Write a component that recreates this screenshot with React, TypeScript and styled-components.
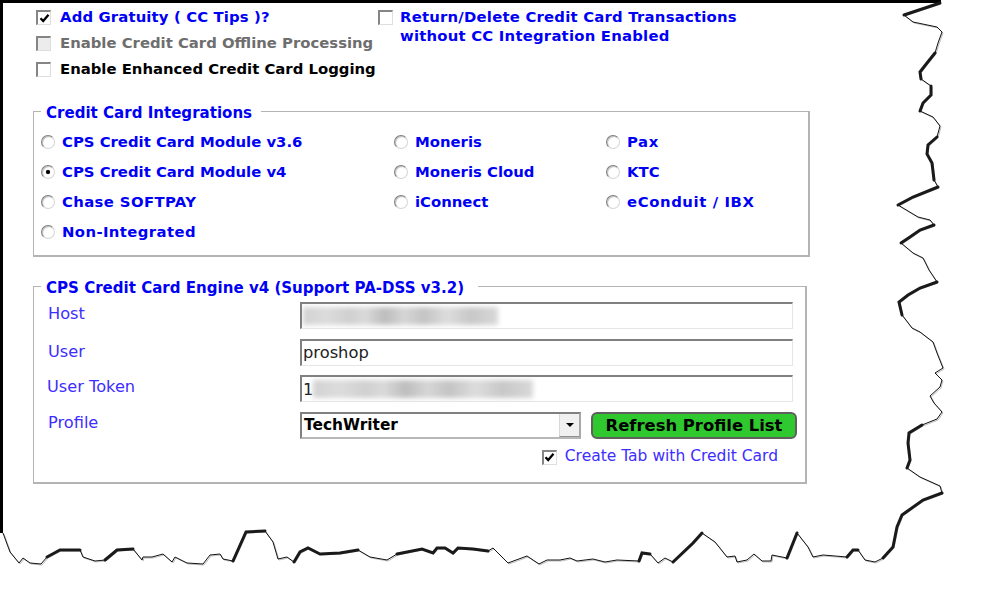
import React from 'react';
import styled, { createGlobalStyle } from 'styled-components';

const GlobalStyle = createGlobalStyle`
  html, body {
    margin: 0;
    padding: 0;
    background: #fff;
  }
`;

const Sheet = styled.div`
  position: relative;
  width: 981px;
  height: 612px;
  box-sizing: border-box;
  overflow: hidden;
  padding: 8px 0 0 33px;
  font-family: "DejaVu Sans", Verdana, sans-serif;
`;

const TornEdge = styled.svg`
  position: absolute;
  left: 0;
  top: 0;
  pointer-events: none;
`;

const TopOptions = styled.div`
  display: grid;
  grid-template-columns: 342px 1fr;
  height: 92px;
`;

const OptionList = styled.div`
  display: flex;
  flex-direction: column;
  gap: 8px;
`;

const OptionRow = styled.div<{ $gap?: number }>`
  display: flex;
  align-items: flex-start;
  gap: ${p => p.$gap ?? 9}px;
  padding-left: 3px;
  height: 18px;
`;

const OptionText = styled.span<{ $tone: 'blue' | 'gray' | 'black'; $spread?: number }>`
  font-size: 14.85px;
  font-weight: 700;
  line-height: 19px;
  white-space: nowrap;
  letter-spacing: ${p => p.$spread ?? 0}px;
  color: ${p => (p.$tone === 'blue' ? '#0000f5' : p.$tone === 'gray' ? '#6e6e6e' : '#000')};
`;

const Box = styled.span<{ $disabled?: boolean }>`
  flex: none;
  display: inline-flex;
  align-items: center;
  justify-content: center;
  width: 12px;
  height: 12px;
  margin-top: 2px;
  box-sizing: content-box;
  border-style: solid;
  border-width: 2px 1px 1px 2px;
  border-color: #858585 #dedede #dedede #858585;
  background: ${p => (p.$disabled ? '#ececec' : '#fff')};
`;

const Panel = styled.fieldset<{ $width: number; $height: number }>`
  box-sizing: border-box;
  width: ${p => p.$width}px;
  height: ${p => p.$height}px;
  margin: 0;
  padding: 0;
  border: 1px solid #b4b4b4;
  border-bottom-width: 2px;
  border-right-width: 2px;
  min-width: 0;
`;

const PanelTitle = styled.legend<{ $tail: number }>`
  margin-left: 7px;
  padding: 4px ${p => p.$tail}px 0 5px;
  font-size: 15.05px;
  font-weight: 700;
  line-height: 18px;
  color: #0000f5;
`;

const RadioGrid = styled.div`
  display: grid;
  grid-template-columns: 353px 212px 1fr;
  grid-auto-rows: 30px;
  padding: 10px 0 0 7px;
`;

const RadioItem = styled.div`
  display: flex;
  align-items: center;
  gap: 7px;
  height: 20px;
`;

const RadioDot = styled.span<{ $on?: boolean }>`
  flex: none;
  width: 12px;
  height: 12px;
  border-radius: 50%;
  border: 1px solid #7f7f7f;
  border-right-color: #d6d6d6;
  border-bottom-color: #d6d6d6;
  box-shadow: inset 1px 1px 1px #bdbdbd;
  background: #fff;
  display: inline-flex;
  align-items: center;
  justify-content: center;

  &::after {
    content: '';
    display: ${p => (p.$on ? 'block' : 'none')};
    width: 4px;
    height: 4px;
    border-radius: 50%;
    background: #000;
    box-shadow: 0 0 1px #444;
  }
`;

const RadioText = styled.span<{ $spread?: number }>`
  font-size: 14.85px;
  font-weight: 700;
  line-height: 18px;
  letter-spacing: ${p => p.$spread ?? 0}px;
  color: #0000f5;
  white-space: nowrap;
`;

const SecondPanelGap = styled.div`
  height: 18px;
`;

const FormGrid = styled.div`
  display: grid;
  grid-template-columns: 252px 493px;
  grid-auto-rows: 27px;
  row-gap: 9.5px;
  padding: 5px 0 0 14px;
`;

const FieldLabel = styled.label<{ $lift: number; $outdent?: boolean }>`
  font-size: 16.2px;
  line-height: 18px;
  color: #3d2dff;
  margin-left: ${p => (p.$outdent ? '-1px' : '0')};
  padding-bottom: ${p => p.$lift}px;
  align-self: center;
`;

const InputShell = styled.div`
  box-sizing: border-box;
  height: 27px;
  display: flex;
  align-items: center;
  overflow: hidden;
  padding-left: 1px;
  border-style: solid;
  border-width: 2px 1px 1px 2px;
  border-color: #808080 #e6e6e6 #e6e6e6 #808080;
  background: #fff;
  font-size: 16.3px;
  color: #222;
`;

const Smudge = styled.span<{ $width: number }>`
  display: block;
  flex: none;
  width: ${p => p.$width}px;
  height: 18px;
  filter: blur(2.5px);
  background: linear-gradient(
    90deg,
    #d2d2d2 0,
    #dcdcdc 12%,
    #d0d0d0 24%,
    #dadada 32%,
    #bdbdbd 42%,
    #d6d6d6 52%,
    #c4c4c4 62%,
    #dddddd 74%,
    #c8c8c8 86%,
    #d8d8d8 100%
  );
`;

const ProfileRow = styled.div`
  display: flex;
  align-items: center;
  gap: 10px;
  width: 498px;
`;

const SelectBox = styled.div`
  box-sizing: border-box;
  width: 281px;
  height: 27px;
  display: flex;
  align-items: stretch;
  border-style: solid;
  border-width: 2px;
  border-color: #808080 #a8a8a8 #b8b8b8 #808080;
  background: #fff;
`;

const SelectValue = styled.span`
  flex: 1;
  padding-left: 2px;
  font-size: 15.4px;
  font-weight: 700;
  line-height: 23px;
  color: #000;
`;

const SelectArrow = styled.span`
  flex: none;
  width: 19px;
  display: flex;
  align-items: center;
  justify-content: center;
  background: #f0f0f0;
  border-left: 1px solid #d8d8d8;
  border-bottom: 1px solid #909090;

  &::after {
    content: '';
    border-style: solid;
    border-width: 4px 4px 0 4px;
    border-color: #000 transparent transparent transparent;
  }
`;

const RefreshButton = styled.button`
  box-sizing: border-box;
  width: 206px;
  height: 27px;
  padding: 0;
  border: 2px solid #5f5f5f;
  border-radius: 6px;
  background: #2fc92f;
  font-family: inherit;
  font-size: 16.4px;
  font-weight: 700;
  color: #000;
`;

const TabOption = styled.div`
  grid-column: 1 / -1;
  display: flex;
  align-items: center;
  justify-content: flex-end;
  gap: 8px;
  padding-right: 15px;
  height: 18px;
  margin-top: -1px;
`;

const TabText = styled.span`
  font-size: 15.5px;
  line-height: 18px;
  color: #3d2dff;
`;

const CheckMark: React.FC = () => (
  <svg width="11" height="11" viewBox="0 0 11 11">
    <path d="M1.5 5.2 L4.2 8 L9.5 1.8" fill="none" stroke="#000" strokeWidth="2.3" />
  </svg>
);

const radios = [
  { label: 'CPS Credit Card Module v3.6' },
  { label: 'Moneris' },
  { label: 'Pax', spread: 0.6 },
  { label: 'CPS Credit Card Module v4', on: true },
  { label: 'Moneris Cloud' },
  { label: 'KTC' },
  { label: 'Chase SOFTPAY', spread: 0.38 },
  { label: 'iConnect' },
  { label: 'eConduit / IBX', spread: 0.6 },
  { label: 'Non-Integrated', spread: 0.4 },
];

// traced from the torn paper edge of the screenshot, clockwise from top right
const edgeLine =
  'M940 3 L904 15 L913 22 L937 27 L942 32 L938 43 L935 53 L927 63 L920 72 L921 79 L931 86 L931 95 L923 103 L920 111 ' +
  'L933 117 L940 126 L937 137 L928 145 L927 154 L932 163 L934 180 L938 187 L913 197 L898 205 L918 217 L930 220 L934 225 ' +
  'L920 230 L910 237 L901 243 L913 253 L923 258 L929 270 L937 282 L920 288 L908 295 L899 302 L902 315 L912 328 L920 332 ' +
  'L933 342 L937 353 L943 368 L935 373 L942 380 L940 387 L930 396 L934 403 L942 412 L937 419 L922 425 L909 433 L908 443 ' +
  'L910 460 L907 468 L920 477 L940 486 L942 493 L923 500 L902 515 L897 527 L893 547 L883 558 L875 562 L865 560 L858 550 ' +
  'L853 550 L847 557 L835 556 L823 555 L813 557 L808 547 L797 533 L787 558 L772 555 L771 561 L762 561 L754 554 L747 560 ' +
  'L737 562 L735 556 L727 557 L715 542 L702 533 L693 543 L673 562 L665 558 L658 563 L650 554 L642 553 L639 561 L617 560 ' +
  'L605 562 L593 559 L577 561 L570 558 L560 560 L547 560 L539 564 L527 556 L508 563 L493 548 L488 551 L473 549 L458 548 ' +
  'L453 553 L445 548 L437 548 L433 553 L422 549 L397 554 L387 560 L370 557 L358 550 L340 553 L320 554 L308 548 L300 552 ' +
  'L294 562 L287 557 L278 559 L273 542 L265 531 L246 532 L233 561 L223 559 L220 554 L210 555 L203 564 L187 563 L175 557 ' +
  'L172 562 L163 554 L152 557 L143 557 L142 560 L133 549 L117 550 L105 560 L95 561 L83 557 L80 550 L60 550 L47 557 ' +
  'L41 564 L30 563 L23 558 L19 563 L10 552 L3 533';

// stretches of the edge where the drop shadow makes the line look heavy
const heavyLines = [
  'M940 3 L904 15',
  'M935 53 L927 63 L920 72 L921 79',
  'M931 86 L931 95 L923 103 L920 111',
  'M937 137 L928 145 L927 154 L932 163 L934 180',
  'M938 187 L913 197 L898 205',
  'M934 225 L920 230 L910 237 L901 243',
  'M937 282 L920 288 L908 295 L899 302 L902 315',
  'M922 425 L909 433 L908 443 L910 460 L907 468',
  'M942 493 L923 500 L902 515 L897 527 L893 547 L883 558',
  'M858 550 L853 550 L847 557',
  'M797 533 L787 558',
  'M702 533 L693 543 L673 562',
  'M650 554 L642 553 L639 561',
  'M488 551 L473 549 L458 548 L453 553 L445 548 L437 548 L433 553 L422 549 L397 554',
  'M358 550 L340 553 L320 554 L308 548 L300 552 L294 562',
  'M265 531 L246 532 L233 561',
  'M133 549 L117 550 L105 560',
  'M80 550 L60 550 L47 557',
];

const App: React.FC = () => (
  <>
    <GlobalStyle />
    <Sheet>
      <TopOptions>
        <OptionList>
          <OptionRow>
            <Box><CheckMark /></Box>
            <OptionText $tone="blue" $spread={0.14}>Add Gratuity ( CC Tips )?</OptionText>
          </OptionRow>
          <OptionRow>
            <Box $disabled />
            <OptionText $tone="gray">Enable Credit Card Offline Processing</OptionText>
          </OptionRow>
          <OptionRow>
            <Box />
            <OptionText $tone="black">Enable Enhanced Credit Card Logging</OptionText>
          </OptionRow>
        </OptionList>
        <OptionRow $gap={7}>
          <Box />
          <OptionText $tone="blue" $spread={0.22}>
            Return/Delete Credit Card Transactions
            <br />
            without CC Integration Enabled
          </OptionText>
        </OptionRow>
      </TopOptions>

      <Panel $width={777} $height={157}>
        <PanelTitle $tail={9}>Credit Card Integrations</PanelTitle>
        <RadioGrid>
          {radios.map(radio => (
            <RadioItem key={radio.label}>
              <RadioDot $on={radio.on} />
              <RadioText $spread={radio.spread}>{radio.label}</RadioText>
            </RadioItem>
          ))}
        </RadioGrid>
      </Panel>

      <SecondPanelGap />

      <Panel $width={774} $height={209}>
        <PanelTitle $tail={14}>CPS Credit Card Engine v4 (Support PA-DSS v3.2)</PanelTitle>
        <FormGrid>
          <FieldLabel $lift={4}>Host</FieldLabel>
          <InputShell><Smudge $width={195} /></InputShell>

          <FieldLabel $lift={0}>User</FieldLabel>
          <InputShell>proshop</InputShell>

          <FieldLabel $lift={4} $outdent>User Token</FieldLabel>
          <InputShell>1<Smudge $width={220} /></InputShell>

          <FieldLabel $lift={4}>Profile</FieldLabel>
          <ProfileRow>
            <SelectBox>
              <SelectValue>TechWriter</SelectValue>
              <SelectArrow />
            </SelectBox>
            <RefreshButton>Refresh Profile List</RefreshButton>
          </ProfileRow>

          <TabOption>
            <Box><CheckMark /></Box>
            <TabText>Create Tab with Credit Card</TabText>
          </TabOption>
        </FormGrid>
      </Panel>

      <TornEdge width="981" height="612" viewBox="0 0 981 612">
        <rect x="0" y="0" width="941" height="3" fill="#000" />
        <rect x="0" y="0" width="3" height="533" fill="#000" />
        <path d={edgeLine} fill="none" stroke="#bdbdbd" strokeWidth="1" transform="translate(1 1)" />
        <path d={edgeLine} fill="none" stroke="#111" strokeWidth="1" />
        {heavyLines.map(d => (
          <path key={d} d={d} fill="none" stroke="#1a1a1a" strokeWidth="3" strokeLinecap="round" />
        ))}
      </TornEdge>
    </Sheet>
  </>
);

export default App;
